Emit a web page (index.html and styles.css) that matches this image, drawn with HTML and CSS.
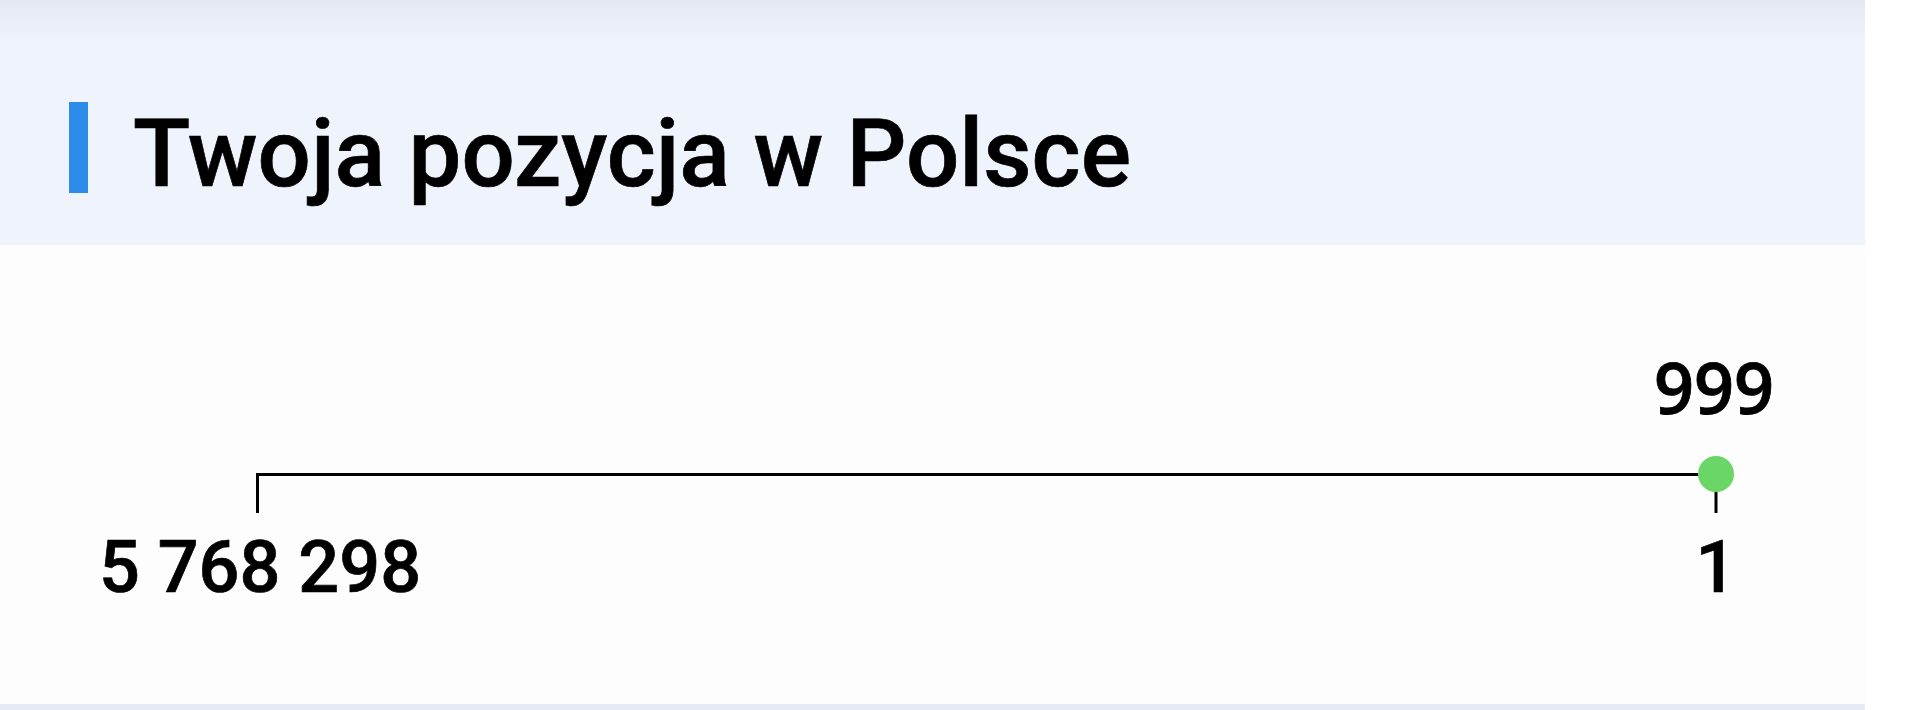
FILE: index.html
```html
<!DOCTYPE html>
<html lang="pl">
<head>
  <meta charset="UTF-8" />
  <title>Twoja pozycja w Polsce</title>
  <link rel="stylesheet" href="styles.css">
</head>
<body>
  <div class="card">
    <div class="card-head">
      <div class="accent"></div>
      <h1 class="title">Twoja pozycja w Polsce</h1>
    </div>

    <div class="rank-chart">
      <svg width="1865" height="459" viewBox="0 0 1865 459">
        <path class="axis" d="M257.5 268 V229.5 H1716" />
        <path class="axis" d="M1716 229.5 V268" />
        <circle class="marker" cx="1716" cy="229" r="18" />
        <text class="val val-you" x="1714" y="169">999</text>
        <text class="val" x="260" y="347">5 768 298</text>
        <text class="val" x="1716" y="347">1</text>
      </svg>
    </div>

    <div class="card-foot"></div>
  </div>
</body>
</html>
```

FILE: styles.css
```css
body {
  margin: 0;
  background: #fff;
  font-family: Roboto, 'Noto Sans', sans-serif;
  color: #000;
}

.card {
  width: 1865px;
  height: 710px;
  display: flex;
  flex-direction: column;
  background: #fdfdfd;
}

.card-head {
  height: 245px;
  box-sizing: border-box;
  padding: 102px 0 0 69px;
  display: flex;
  align-items: flex-start;
  gap: 45px;
  background: linear-gradient(#e4e8f1, #eef3fc 40px);
}

.accent {
  width: 19px;
  height: 91px;
  background: #2d8cea;
}

.title {
  margin: 5px 0 0;
  font-size: 94px;
  line-height: 1;
  font-weight: 500;
  -webkit-text-stroke: 0.7px #000;
}

.rank-chart {
  flex: 1;
}

.rank-chart svg { display: block; }

.axis {
  fill: none;
  stroke: #000;
  stroke-width: 3;
}

.marker { fill: #6bd668; }

.val {
  font-family: Roboto, sans-serif;
  font-size: 72px;
  font-weight: 500;
  text-anchor: middle;
  fill: #000;
  stroke: #000;
  stroke-width: 0.7px;
}

.val-you {
  font-family: 'Open Sans', sans-serif;
  font-size: 70px;
  font-weight: 600;
  stroke-width: 0.8px;
}

.card-foot {
  height: 6px;
  background: #e6eaf4;
}
```
